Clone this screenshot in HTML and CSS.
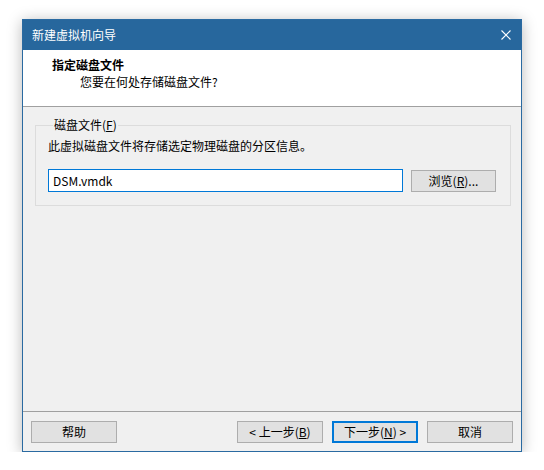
FILE: index.html
```html
<!DOCTYPE html>
<html lang="zh-CN">
<head>
<meta charset="utf-8">
<link rel="stylesheet" href="styles.css">
</head>
<body>
<div class="window">
  <div class="titlebar">
    <span class="title">新建虚拟机向导</span>
    <svg class="close" width="10" height="10" viewBox="0 0 10 10"><path d="M0.5 0.5L9.5 9.5M9.5 0.5L0.5 9.5" stroke="#fff" stroke-width="1.1" fill="none"/></svg>
  </div>
  <div class="header">
    <div class="h-title">指定磁盘文件</div>
    <div class="h-sub">您要在何处存储磁盘文件?</div>
  </div>
  <div class="body">
    <fieldset class="group">
      <legend class="legend">磁盘文件(<u>F</u>)</legend>
      <div class="desc">此虚拟磁盘文件将存储选定物理磁盘的分区信息。</div>
      <div class="row">
        <div class="input">DSM.vmdk</div>
        <div class="btn browse">浏览(<u>R</u>)...</div>
      </div>
    </fieldset>
  </div>
  <div class="footer">
    <div class="btn">帮助</div>
    <div class="spacer"></div>
    <div class="btn">&lt; 上一步(<u>B</u>)</div>
    <div class="btn default">下一步(<u>N</u>) &gt;</div>
    <div class="btn">取消</div>
  </div>
</div>
</body>
</html>
```
FILE: styles.css
```css
html, body {
  margin: 0;
  padding: 0;
  background: #ffffff;
}
body {
  padding: 19px 0 0 22px;
  font-family: "Noto Sans CJK SC", "Noto Sans", sans-serif;
  font-size: 12px;
  line-height: 16px;
  color: #000;
}
.window {
  box-sizing: border-box;
  width: 500px;
  height: 433px;
  border: 1px solid #2a6aa1;
  background: #f0f0f0;
  display: flex;
  flex-direction: column;
  box-shadow: 0 2px 14px rgba(0, 0, 0, 0.28);
}
.titlebar {
  height: 30px;
  background: #27679d;
  color: #fff;
  display: flex;
  align-items: center;
  padding: 0 10px 0 9px;
}
.title {
  flex: 1;
}
.close {
  display: block;
  margin-top: -1px;
}
.header {
  height: 56px;
  background: #fff;
  border-bottom: 1px solid #a0a0a0;
  box-sizing: content-box;
  padding: 0;
}
.h-title {
  font-weight: bold;
  padding: 7px 0 0 29px;
}
.h-sub {
  padding: 1px 0 0 57px;
}
.body {
  flex: 1;
  padding: 10px 10px 0 12px;
}
.group {
  margin: 0;
  border: 1px solid #dcdcdc;
  padding: 8px 14px 13px 12px;
  min-width: 0;
}
.legend {
  padding: 0 1px;
  margin-left: 5px;
  line-height: 16px;
}
.desc {
  margin-top: -3px;
}
.row {
  display: flex;
  align-items: flex-start;
  margin-top: 15px;
}
.input {
  box-sizing: border-box;
  width: 355px;
  height: 23px;
  border: 1px solid #0078d7;
  background: #fff;
  padding: 0 4px;
  line-height: 21px;
}
.btn {
  box-sizing: border-box;
  width: 86px;
  height: 22px;
  border: 1px solid #adadad;
  background: #e1e1e1;
  text-align: center;
  line-height: 20px;
}
.browse {
  width: 85px;
  margin: 1px 0 0 8px;
}
.btn.default {
  border: 2px solid #0078d7;
  line-height: 18px;
}
.footer {
  border-top: 1px solid #a0a0a0;
  display: flex;
  gap: 9px;
  padding: 9px 8px 8px 8px;
}
.spacer {
  flex: 1;
}
```
